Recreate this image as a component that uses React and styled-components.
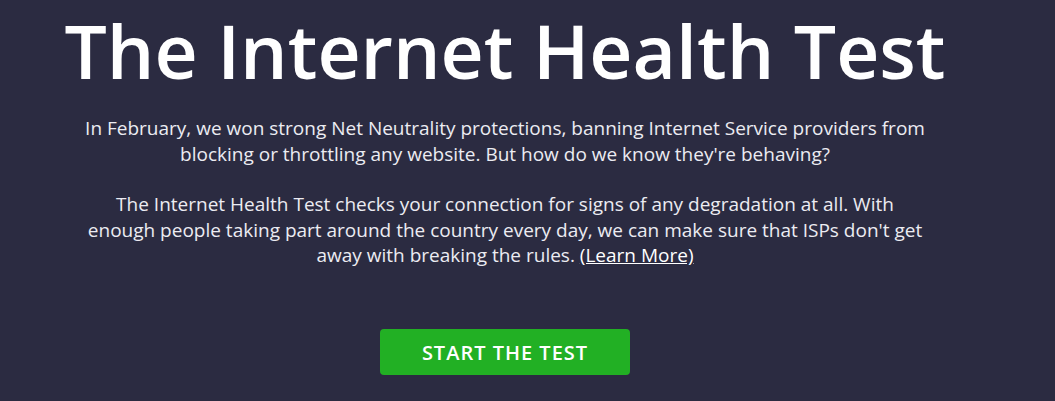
import React from "react";
import styled, { createGlobalStyle } from "styled-components";

const GlobalStyle = createGlobalStyle`
  html, body {
    margin: 0;
    padding: 0;
    background: #2b2b41;
  }
  body {
    font-family: "Open Sans", "Liberation Sans", sans-serif;
    color: #ececf2;
  }
`;

const Page = styled.main`
  width: 1010px;
  height: 401px;
  overflow: hidden;
  display: flex;
  flex-direction: column;
  align-items: center;
`;

const Title = styled.h1`
  margin: 12.5px 0 0;
  font-size: 75px;
  line-height: 1;
  font-weight: 600;
  color: #ffffff;
  text-align: center;
  white-space: nowrap;
`;

const Intro = styled.div`
  margin-top: 28.5px;
  width: 842px;
  text-align: center;
`;

const Para = styled.p`
  margin: 0 0 25px;
  font-size: 19px;
  line-height: 25.5px;

  &:last-child {
    margin-bottom: 0;
  }
`;

const LearnMore = styled.a`
  color: #ffffff;
  text-decoration: underline;
`;

const StartButton = styled.button`
  margin-top: 60.5px;
  width: 250px;
  height: 46px;
  border: none;
  border-radius: 4px;
  background: #22b024;
  color: #ffffff;
  font-family: "Open Sans", "Liberation Sans", sans-serif;
  font-size: 20px;
  font-weight: 600;
  letter-spacing: 1px;
  text-transform: uppercase;
  cursor: pointer;
`;

export default function App() {
  return (
    <>
      <GlobalStyle />
      <Page>
        <Title>The Internet Health Test</Title>
        <Intro>
          <Para>
            In February, we won strong Net Neutrality protections, banning Internet Service providers from
            blocking or throttling any website. But how do we know they're behaving?
          </Para>
          <Para>
            The Internet Health Test checks your connection for signs of any degradation at all. With
            enough people taking part around the country every day, we can make sure that ISPs don't get
            away with breaking the rules. <LearnMore href="#">(Learn More)</LearnMore>
          </Para>
        </Intro>
        <StartButton>Start the test</StartButton>
      </Page>
    </>
  );
}
